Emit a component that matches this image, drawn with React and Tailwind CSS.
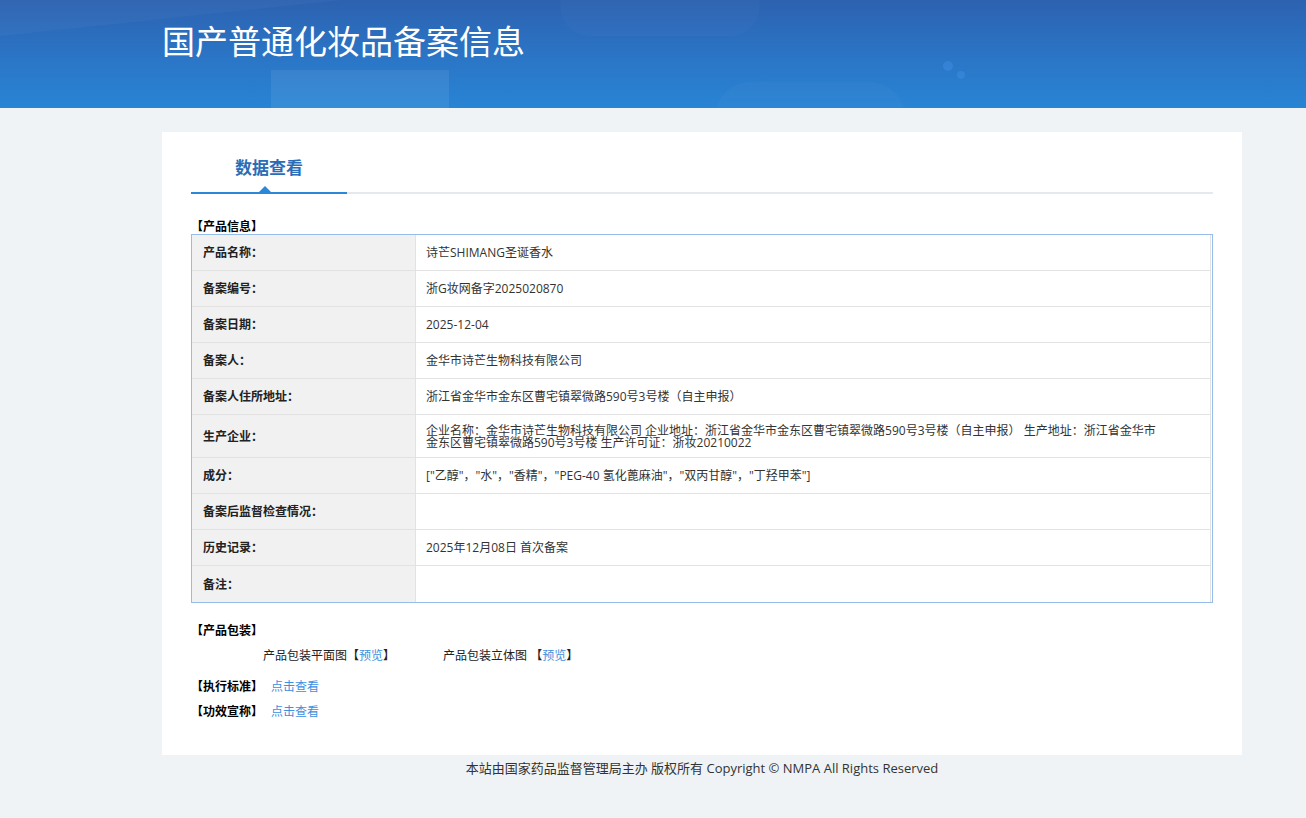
import React from 'react';

const rows = [
  { label: '产品名称：', value: '诗芒SHIMANG圣诞香水' },
  { label: '备案编号：', value: '浙G妆网备字2025020870' },
  { label: '备案日期：', value: '2025-12-04' },
  { label: '备案人：', value: '金华市诗芒生物科技有限公司' },
  { label: '备案人住所地址：', value: '浙江省金华市金东区曹宅镇翠微路590号3号楼（自主申报）' },
  {
    label: '生产企业：',
    value:
      '企业名称：金华市诗芒生物科技有限公司 企业地址：浙江省金华市金东区曹宅镇翠微路590号3号楼（自主申报） 生产地址：浙江省金华市金东区曹宅镇翠微路590号3号楼 生产许可证：浙妆20210022',
    tall: true,
  },
  { label: '成分：', value: '["乙醇"，"水"，"香精"，"PEG-40 氢化蓖麻油"，"双丙甘醇"，"丁羟甲苯"]' },
  { label: '备案后监督检查情况：', value: '' },
  { label: '历史记录：', value: '2025年12月08日 首次备案' },
  { label: '备注：', value: '' },
];

const Header = () => (
  <header className="relative h-[108px] overflow-hidden bg-gradient-to-b from-[#2c62b0] via-[#2b74c5] to-[#2884d4]">
    {/* background shapes */}
    <div className="absolute -left-[40px] -top-[60px] h-[80px] w-[380px] -rotate-6 bg-white/[0.03]" />
    <div className="absolute left-[271px] top-[70px] h-[60px] w-[178px] bg-white/[0.07]" />
    <div className="absolute left-[560px] -top-[24px] h-[60px] w-[200px] rounded-full bg-white/[0.02]" />
    <div className="absolute left-[715px] top-[82px] h-[70px] w-[190px] rounded-full bg-white/[0.025]" />
    <div className="absolute left-[943px] top-[61px] h-[10px] w-[10px] rounded-full bg-[#3a8ae0]/60" />
    <div className="absolute left-[957px] top-[71px] h-[8px] w-[8px] rounded-full bg-[#3a8ae0]/60" />
    <div className="relative ml-[162px] w-[1080px] pt-[25px]">
      <h1 className="text-[33px] font-normal leading-[34px] text-white">国产普通化妆品备案信息</h1>
    </div>
  </header>
);

const Tabs = () => (
  <div className="flex border-b-2 border-[#e5e8ec]">
    <div className="relative -mb-[2px] w-[156px] border-b-2 border-[#2d87d8] pt-[24px] pb-[12px] text-center">
      <span className="text-[17px] font-bold leading-[24px] text-[#2a6db6]">数据查看</span>
      <span className="absolute bottom-0 left-[68px] h-0 w-0 border-x-[6px] border-b-[6px] border-x-transparent border-b-[#2d87d8]" />
    </div>
  </div>
);

const InfoTable = () => (
  <div className="border border-[#95bcea] pr-px">
    {rows.map((r, i) => (
      <div
        key={r.label}
        className={`grid grid-cols-[224px_1fr] ${r.tall ? 'h-[43px]' : 'h-[36px]'} ${
          i < rows.length - 1 ? 'border-b border-[#e2e2e2]' : ''
        }`}
      >
        <div className="flex items-center border-r border-[#e2e2e2] bg-[#f1f1f1] pl-[11px] pt-px text-[12px] font-bold text-[#222]">
          {r.label}
        </div>
        <div className="flex items-center border-r border-[#e2e2e2] pl-[10px] pt-px text-[12px] leading-[12px] text-[#333]">
          <span className="max-w-[740px]">{r.value}</span>
        </div>
      </div>
    ))}
  </div>
);

export default function App() {
  return (
    <div className="min-h-[818px] bg-[#eff3f6] font-['Open_Sans','Noto_Sans_CJK_SC',sans-serif]">
      <Header />
      <div className="ml-[162px] w-[1080px]">
        <main className="mt-6 bg-white px-[29px] pb-[35px]">
          <Tabs />
          <div className="mt-[25px] text-[12px] font-bold leading-[15px] text-black">【产品信息】</div>
          <InfoTable />
          <div className="mt-[20px] text-[12px] font-bold leading-[16px] text-black">【产品包装】</div>
          <div className="mt-[9px] flex gap-[48px] pl-[72px] text-[12px] leading-[16px] text-[#222]">
            <span>
              产品包装平面图【<a className="text-[#3d8fe0]">预览</a>】
            </span>
            <span>
              产品包装立体图 【<a className="text-[#3d8fe0]">预览</a>】
            </span>
          </div>
          <div className="mt-[15px] flex text-[12px] leading-[16px]">
            <span className="font-bold text-black">【执行标准】</span>
            <a className="ml-2 text-[#3d8fe0]">点击查看</a>
          </div>
          <div className="mt-[9px] flex text-[12px] leading-[16px]">
            <span className="font-bold text-black">【功效宣称】</span>
            <a className="ml-2 text-[#3d8fe0]">点击查看</a>
          </div>
        </main>
        <footer className="text-center text-[13px] leading-[26px] text-[#333]">
          本站由国家药品监督管理局主办 版权所有 Copyright © NMPA All Rights Reserved
        </footer>
      </div>
    </div>
  );
}
